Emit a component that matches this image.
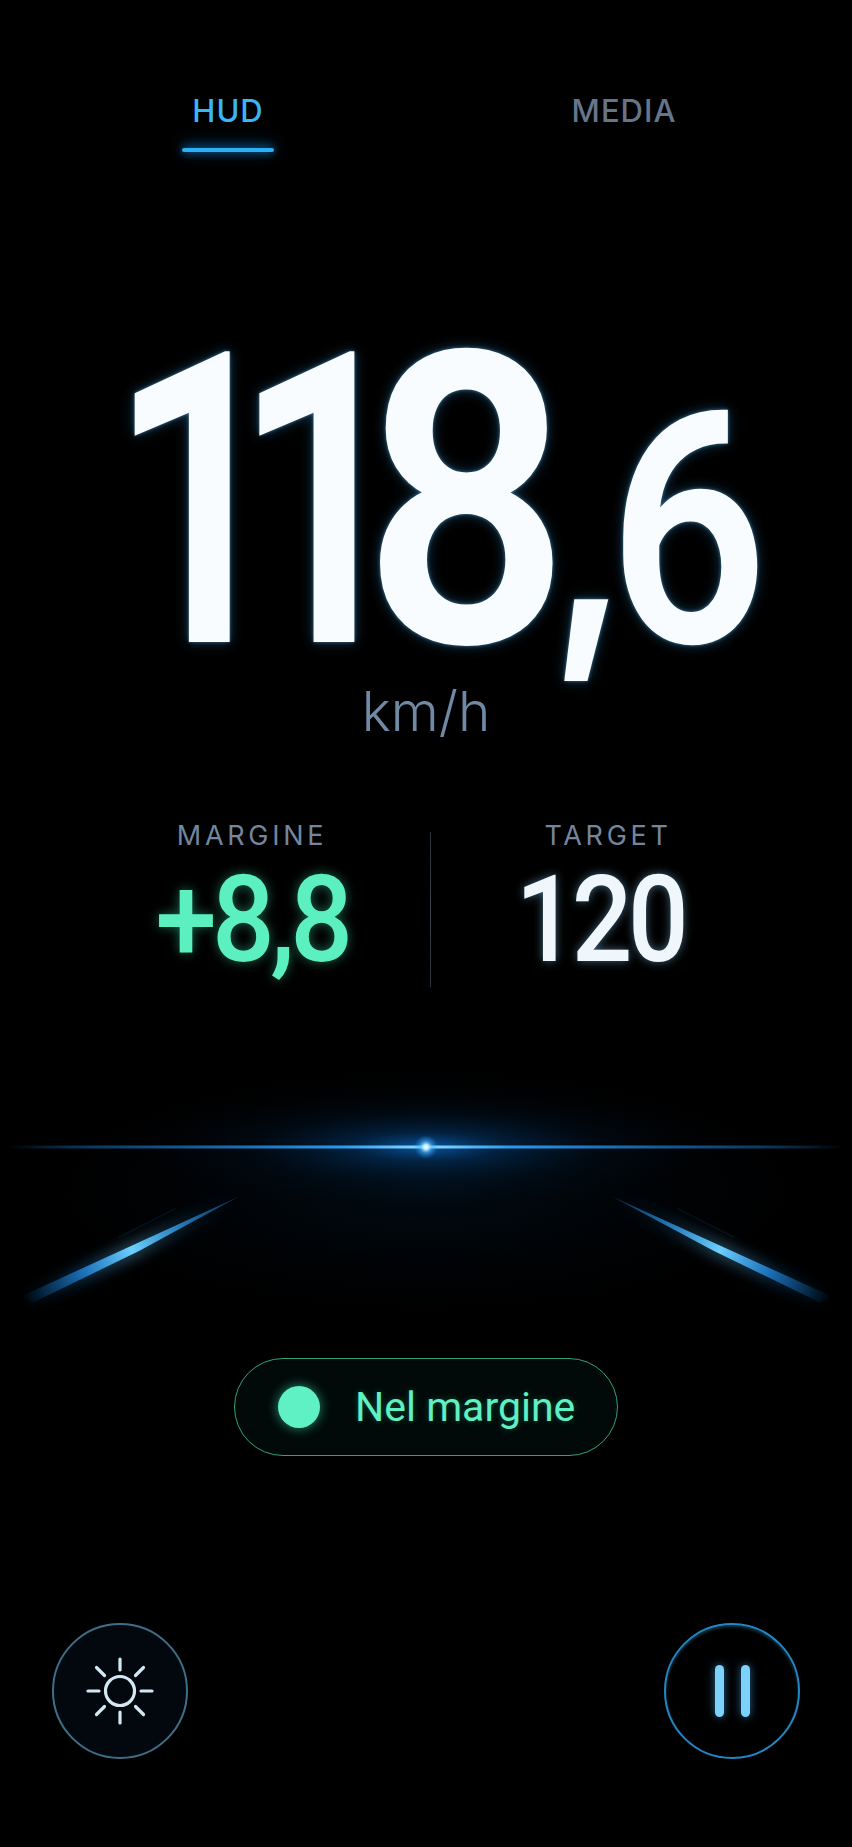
<main class="screen">
  <nav class="tabs">
    <div class="tab active"><span>HUD</span><i class="tab-line"></i></div>
    <div class="tab"><span>MEDIA</span></div>
  </nav>

  <section class="speed">
    <div class="number"><span class="whole a">11</span><span class="whole b">8</span><span class="comma">,</span><span class="dec">6</span></div>
    <div class="unit">km/h</div>
  </section>

  <section class="stats">
    <div class="stat">
      <div class="label">MARGINE</div>
      <div class="value green">+8,8</div>
    </div>
    <div class="divider"></div>
    <div class="stat">
      <div class="label">TARGET</div>
      <div class="value white">120</div>
    </div>
  </section>

  <svg class="road" viewBox="0 0 852 318" width="852" height="318" aria-hidden="true">
    <defs>
      <radialGradient id="halo" cx="0.5" cy="0.5" r="0.5">
        <stop offset="0" stop-color="#0a6fd0" stop-opacity="0.75" />
        <stop offset="0.25" stop-color="#0757a8" stop-opacity="0.33" />
        <stop offset="0.6" stop-color="#03305f" stop-opacity="0.12" />
        <stop offset="1" stop-color="#021a33" stop-opacity="0" />
      </radialGradient>
      <radialGradient id="ambient" cx="0.5" cy="0.5" r="0.5">
        <stop offset="0" stop-color="#02182c" stop-opacity="0.45" />
        <stop offset="1" stop-color="#01060c" stop-opacity="0" />
      </radialGradient>
      <radialGradient id="star" cx="0.5" cy="0.5" r="0.5">
        <stop offset="0" stop-color="#ffffff" />
        <stop offset="0.2" stop-color="#c4f0ff" />
        <stop offset="0.5" stop-color="#4fb8ff" stop-opacity="0.55" />
        <stop offset="1" stop-color="#1a8cf0" stop-opacity="0" />
      </radialGradient>
      <linearGradient id="hline" x1="0" x2="1" y1="0" y2="0">
        <stop offset="0" stop-color="#1f8fe8" stop-opacity="0" />
        <stop offset="0.1" stop-color="#1773c4" stop-opacity="0.5" />
        <stop offset="0.4" stop-color="#2a9af0" />
        <stop offset="0.5" stop-color="#8fdcff" />
        <stop offset="0.6" stop-color="#2a9af0" />
        <stop offset="0.9" stop-color="#1773c4" stop-opacity="0.5" />
        <stop offset="1" stop-color="#1f8fe8" stop-opacity="0" />
      </linearGradient>
      <linearGradient id="rayL" gradientUnits="userSpaceOnUse" x1="240" y1="96" x2="22" y2="200">
        <stop offset="0" stop-color="#1f8fe8" stop-opacity="0.25" />
        <stop offset="0.25" stop-color="#2a90e0" stop-opacity="0.75" />
        <stop offset="0.5" stop-color="#6cd0ff" />
        <stop offset="0.72" stop-color="#1f7fd0" stop-opacity="0.85" />
        <stop offset="1" stop-color="#0f5fa8" stop-opacity="0" />
      </linearGradient>
      <linearGradient id="rayR" gradientUnits="userSpaceOnUse" x1="611" y1="96" x2="831" y2="200">
        <stop offset="0" stop-color="#1f8fe8" stop-opacity="0.25" />
        <stop offset="0.25" stop-color="#2a90e0" stop-opacity="0.75" />
        <stop offset="0.5" stop-color="#6cd0ff" />
        <stop offset="0.72" stop-color="#1f7fd0" stop-opacity="0.85" />
        <stop offset="1" stop-color="#0f5fa8" stop-opacity="0" />
      </linearGradient>
      <filter id="soft" x="-30%" y="-60%" width="160%" height="220%"><feGaussianBlur stdDeviation="8" /></filter>
      <filter id="tiny" x="-5%" y="-50%" width="110%" height="200%"><feGaussianBlur stdDeviation="0.5" /></filter>
    </defs>
    <g transform="translate(0 60)">
      <ellipse cx="426" cy="90" rx="430" ry="140" fill="url(#ambient)" />
      <ellipse cx="426" cy="47" rx="290" ry="60" fill="url(#halo)" />
      <rect x="8" y="45.500" width="836" height="3" fill="url(#hline)" filter="url(#tiny)" />
      <circle cx="426" cy="47" r="12" fill="url(#star)" />
      <polygon points="175,108 118,137 119,138 176,109" fill="#0f5fa8" opacity="0.18" />
      <polygon points="678,108 735,137 734,138 677,109" fill="#0f5fa8" opacity="0.18" />
      <polygon points="240,96 22,198 30,204 140,150" fill="url(#rayL)" filter="url(#soft)" opacity="0.85" />
      <polygon points="611,96 831,198 823,204 713,150" fill="url(#rayR)" filter="url(#soft)" opacity="0.85" />
      <polygon points="240,96 22,196 32,203 139,151" fill="url(#rayL)" filter="url(#tiny)" />
      <polygon points="611,96 831,196 821,203 714,151" fill="url(#rayR)" filter="url(#tiny)" />
    </g>
  </svg>

  <div class="pill-row">
    <div class="pill">
      <i class="dot"></i>
      <span>Nel margine</span>
    </div>
  </div>

  <footer class="controls">
    <button class="round sun" aria-label="Luminosità">
      <svg viewBox="0 0 80 80" width="80" height="80" fill="none" stroke="#d3e8f3" stroke-width="3.2" stroke-linecap="round">
        <circle cx="40" cy="40" r="14.500" />
        <path d="M40 8v11M40 61v11M8 40h11M61 40h11M16.500 16.500l8 8M55.500 55.500l8 8M16.500 63.500l8-8M55.500 24.500l8-8" />
      </svg>
    </button>
    <button class="round pause" aria-label="Pausa">
      <i></i><i></i>
    </button>
  </footer>
</main>

<style>
  :global(body) {
    margin: 0;
    background: #000;
  }
  .screen {
    width: 852px;
    height: 1847px;
    overflow: hidden;
    background: #000;
    display: flex;
    flex-direction: column;
    font-family: Inter, "Noto Sans", sans-serif;
  }
  .tabs {
    display: grid;
    grid-template-columns: 396px 396px;
    padding: 92px 30px 0;
    height: 61px;
    flex: none;
  }
  .tab {
    display: flex;
    flex-direction: column;
    align-items: center;
    font-size: 31px;
    font-weight: 450;
    letter-spacing: 1px;
    line-height: 38px;
    color: #66758a;
  }
  .tab.active {
    color: #38b6f5;
  }
  .tab-line {
    width: 92px;
    height: 4px;
    margin-top: 18px;
    border-radius: 2px;
    background: #2cb0f5;
    box-shadow: 0 0 10px #0f8be0, 0 -3px 16px rgba(15, 139, 224, 0.6);
  }
  .speed {
    margin-top: 165px;
    flex: none;
    display: flex;
    flex-direction: column;
    align-items: center;
  }
  .number {
    height: 360px;
    margin-left: 10px;
    font-family: Roboto, sans-serif;
    font-weight: 600;
    color: #f8fcff;
    white-space: nowrap;
    line-height: 370px;
    transform: scaleX(0.86);
    text-shadow: 0 0 4px rgba(120, 205, 250, 0.5), 0 0 14px rgba(50, 150, 220, 0.4);
  }
  .whole {
    display: inline-block;
    font-size: 408px;
  }
  .a {
    letter-spacing: -72px;
    transform: scaleX(0.9);
  }
  .b {
    letter-spacing: -25px;
    transform: translateX(-7px) scaleX(1.035);
  }
  .comma {
    display: inline-block;
    font-family: Inter, sans-serif;
    font-weight: 700;
    font-size: 270px;
    letter-spacing: -23px;
    transform: translateY(-13px);
  }
  .dec {
    font-size: 324px;
  }
  .unit {
    font-size: 55px;
    line-height: 66px;
    font-weight: 300;
    color: #708aa6;
  }
  .stats {
    display: grid;
    grid-template-columns: 356px 1px 354px;
    padding-left: 74px;
    margin-top: 76px;
    height: 170px;
    flex: none;
  }
  .stat {
    display: flex;
    flex-direction: column;
    align-items: center;
  }
  .divider {
    background: linear-gradient(#2b3440, #36414f 50%, #2b3440);
    height: 155px;
    margin-top: 12px;
  }
  .label {
    font-size: 27px;
    line-height: 32px;
    letter-spacing: 3.700px;
    font-weight: 400;
    color: #74869d;
    margin-bottom: 12px;
  }
  .value {
    font-family: Roboto, sans-serif;
    font-weight: 500;
    font-size: 120px;
    line-height: 112px;
    letter-spacing: -5px;
    transform: scaleX(0.92);
  }
  .green {
    color: #5cf0c0;
    text-shadow: 0 0 12px rgba(60, 230, 170, 0.45);
  }
  .white {
    color: #eff7fd;
    margin-right: 16px;
    transform: scaleX(0.89);
    text-shadow: 0 0 10px rgba(130, 200, 245, 0.5);
  }
  .road {
    display: block;
    margin-top: 50px;
    flex: none;
  }
  .pill-row {
    display: flex;
    justify-content: center;
    flex: none;
  }
  .pill {
    box-sizing: border-box;
    width: 384px;
    height: 98px;
    padding-left: 43px;
    display: flex;
    align-items: center;
    gap: 35px;
    border: 1.5px solid #35a080;
    border-radius: 49px;
    background: #010a09;
    color: #5ff0c4;
    font-family: Roboto, sans-serif;
    font-size: 41px;
    text-shadow: 0 0 6px rgba(60, 230, 170, 0.3);
  }
  .dot {
    width: 42px;
    height: 42px;
    flex: none;
    border-radius: 50%;
    background: #5ff0c4;
    box-shadow: 0 0 12px rgba(70, 235, 180, 0.6);
  }
  .controls {
    display: flex;
    justify-content: space-between;
    padding: 167px 52px 0;
    flex: none;
  }
  .round {
    box-sizing: border-box;
    width: 136px;
    height: 136px;
    padding: 0;
    border-radius: 50%;
    background: #000;
    display: flex;
    align-items: center;
    justify-content: center;
  }
  .sun {
    background: #02080e;
    border: 2px solid #3f6e88;
  }
  .pause {
    gap: 17px;
    border: 2px solid #2287c4;
    box-shadow: inset 0 2px 3px rgba(70, 180, 240, 0.3);
  }
  .pause i {
    width: 9px;
    height: 52px;
    border-radius: 4.500px;
    background: #7bd2fb;
    box-shadow: 0 0 8px rgba(70, 170, 240, 0.6);
  }
</style>
